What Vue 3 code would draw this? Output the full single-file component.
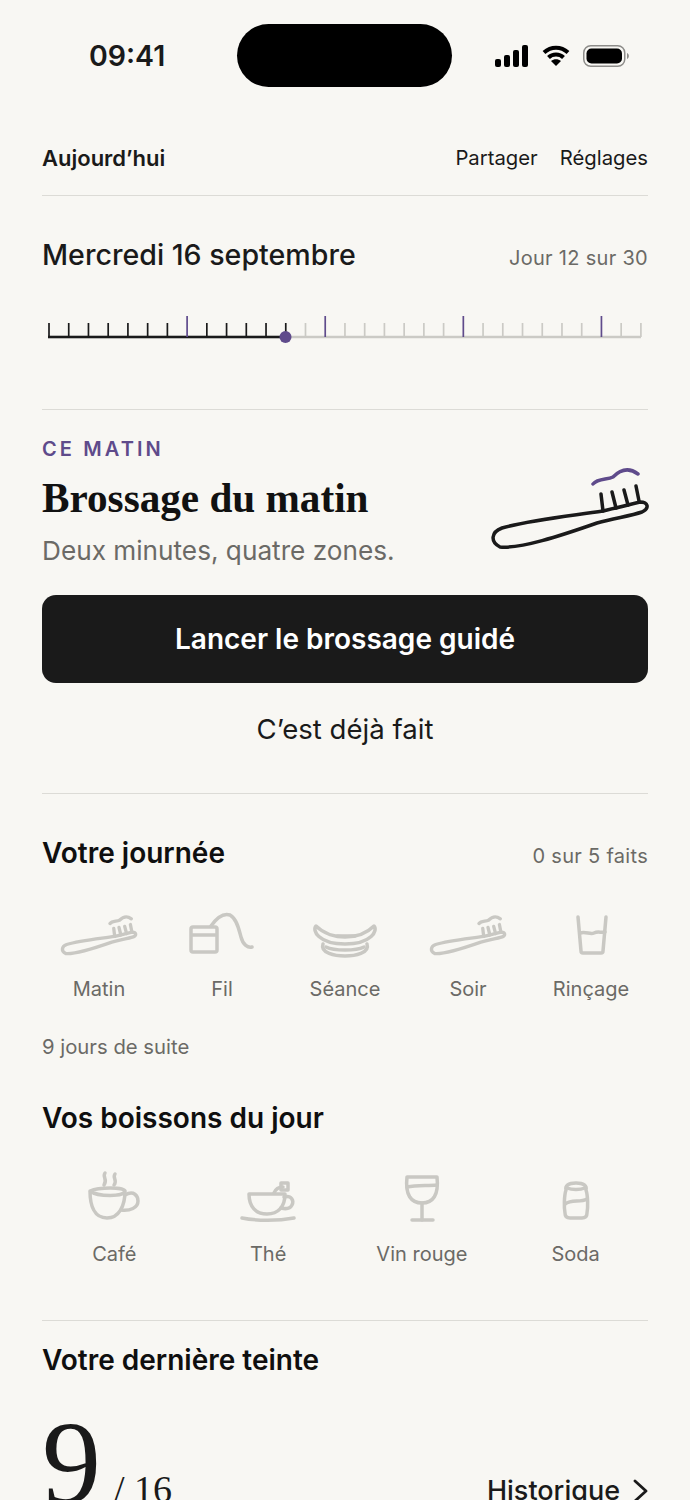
<script setup>
const ticks = Array.from({ length: 31 }, (_, i) => ({
  x: 49 + i * 19.73,
  accent: i % 7 === 0 && i > 0,
  done: i <= 12
}))

const brush = [
  'M133 61C100 66 60 70 32 78C21 82 20 92 30 97C50 99 90 86 127 73C145 68 160 66 172 62C180 58 178 52 170 52C158 55 146 58 133 61Z',
  'M133 61L131 44M146 58L142 42M158 55L154 40M169 51L166 36',
  'M123 34C128 28 137 30 143 27C152 18 160 18 168 24'
]

const habits = [
  { label: 'Matin', w: 78, box: '18 16 164 84', sw: 7, paths: brush },
  {
    label: 'Fil', w: 66, box: '190 912 66 46', sw: 3.5,
    paths: ['M194 927H216Q218 927 218 929V950Q218 952 216 952H194Q192 952 192 950V929Q192 927 194 927ZM192 935H218', 'M212 926C219 916 225 913 231 915C238 919 240 930 242 937C244 945 249 948 253 947']
  },
  {
    label: 'Séance', w: 66, box: '312 912 66 46', sw: 3.5,
    paths: ['M316 926C324 934 336 937 345 937C355 937 366 934 374 926C378 930 372 944 345 944C318 944 312 930 316 926Z', 'M323 944C320 953 335 956 345 956C355 956 370 953 367 944', 'M326 947C334 951 356 951 364 947', 'M337 936H355']
  },
  { label: 'Soir', w: 78, box: '18 16 164 84', sw: 7, paths: brush },
  {
    label: 'Rinçage', w: 46, box: '567 912 46 46', sw: 3.5,
    paths: ['M577 917L580 951Q580 953 582 953H600Q602 953 602 951L605 917', 'M579 933C585 931 589 935 593 933C597 931 600 933 604 932']
  }
]

const drinks = [
  {
    label: 'Café', box: '85 1170 60 53',
    paths: ['M91 1191C100 1187 125 1187 126 1191C125 1197 99 1197 91 1191ZM91 1191C91 1205 95 1218 108 1218C120 1218 126 1206 126 1191', 'M126 1195C135 1190 139 1196 139 1201C139 1208 131 1211 122 1210', 'M106 1173C103 1177 109 1179 105 1185M116 1174C113 1178 119 1180 115 1185']
  },
  {
    label: 'Thé', box: '238 1170 60 53',
    paths: ['M249 1194H285C285 1207 278 1214 267 1214C256 1214 249 1207 249 1194Z', 'M284 1197C292 1195 294 1201 292 1205C290 1209 285 1209 281 1208', 'M242 1218C257 1221 278 1221 294 1218', 'M274 1193C276 1188 280 1187 283 1187', 'M281 1183H288V1190H281Z']
  },
  {
    label: 'Vin rouge', box: '392 1170 60 53',
    paths: ['M407 1177H437C439 1195 433 1203 422 1203C411 1203 405 1195 407 1177Z', 'M407 1187C417 1185 427 1186 437 1185', 'M422 1203V1220', 'M412 1220H433']
  },
  {
    label: 'Soda', box: '546 1170 60 53',
    paths: ['M566 1190C565 1186 568 1183 576 1183C584 1183 587 1186 586 1190C588 1196 588 1208 587 1213C587 1217 585 1218 582 1218H570C567 1218 565 1217 565 1213C564 1208 564 1196 566 1190Z', 'M567 1188C572 1190 580 1190 585 1188', 'M565 1204C572 1199 580 1203 587 1199']
  }
]
</script>

<template>
  <div class="page">
    <div class="status">
      <span class="time">09:41</span>
      <div class="island"></div>
      <div class="status-icons">
        <svg width="34" height="22" viewBox="0 0 34 22">
          <rect x="0" y="14" width="6" height="8" rx="2" />
          <rect x="9" y="10" width="6" height="12" rx="2" />
          <rect x="18" y="5" width="6" height="17" rx="2" />
          <rect x="27" y="0" width="6" height="22" rx="2" />
        </svg>
        <svg width="28" height="22" viewBox="0 0 28 22">
          <path d="M2 7.500C9 1 19 1 26 7.500" class="wifi" />
          <path d="M6.500 12.500C10.500 8.500 17.500 8.500 21.500 12.500" class="wifi" />
          <path d="M14 21L9 16C12 13.500 16 13.500 19 16Z" />
        </svg>
        <svg width="47" height="22" viewBox="0 0 47 22">
          <rect x="0.750" y="0.750" width="41" height="20.500" rx="7" fill="none" stroke="#8d8c89" stroke-width="1.500" />
          <rect x="3.500" y="3.500" width="35.500" height="15" rx="5" />
          <path d="M44 8C46.500 9 46.500 13 44 14Z" fill="#8d8c89" />
        </svg>
      </div>
    </div>

    <main class="content">
      <header class="top-nav">
        <span class="nav-title">Aujourd’hui</span>
        <div class="nav-links">
          <span>Partager</span>
          <span>Réglages</span>
        </div>
      </header>

      <section class="date-block">
        <div class="row">
          <h2 class="date">Mercredi 16 septembre</h2>
          <span class="day-count">Jour 12 sur 30</span>
        </div>
        <svg class="ruler" width="606" height="34" viewBox="42 314 606 34">
          <line x1="48" y1="337" x2="641" y2="337" stroke="#cbcac5" stroke-width="2.400" />
          <line x1="48" y1="337" x2="286" y2="337" stroke="#1a1a1a" stroke-width="2.400" />
          <line
            v-for="t in ticks"
            :key="t.x"
            :x1="t.x"
            :x2="t.x"
            :y1="t.accent ? 316 : 323"
            y2="337"
            :stroke="t.accent ? '#5f4b8b' : t.done ? '#1a1a1a' : '#cbcac5'"
            stroke-width="1.700"
          />
          <circle cx="285.500" cy="337" r="6" fill="#5f4b8b" />
        </svg>
      </section>

      <section class="hero">
        <div class="hero-top">
          <div>
            <div class="eyebrow">CE MATIN</div>
            <h1 class="hero-title">Brossage du matin</h1>
            <p class="hero-sub">Deux minutes, quatre zones.</p>
          </div>
          <svg class="hero-brush" width="160" height="84" viewBox="20 17 160 84" fill="none" stroke-width="3.500" stroke-linecap="round" stroke-linejoin="round">
            <path :d="brush[0]" stroke="#1a1a1a" />
            <path :d="brush[1]" stroke="#1a1a1a" />
            <path :d="brush[2]" stroke="#5f4b8b" />
          </svg>
        </div>
        <button class="primary">Lancer le brossage guidé</button>
        <div class="secondary">C’est déjà fait</div>
      </section>

      <section class="day">
        <div class="row">
          <h2 class="heading">Votre journée</h2>
          <span class="day-count">0 sur 5 faits</span>
        </div>
        <div class="habits">
          <div v-for="item in habits" :key="item.label" class="icon-item">
            <svg :width="item.w" height="46" :viewBox="item.box" fill="none" stroke="#c9c8c3" :stroke-width="item.sw" stroke-linecap="round" stroke-linejoin="round">
              <path v-for="d in item.paths" :key="d" :d="d" />
            </svg>
            <span>{{ item.label }}</span>
          </div>
        </div>
        <p class="streak">9 jours de suite</p>

        <h2 class="heading drinks-heading">Vos boissons du jour</h2>
        <div class="drinks">
          <div v-for="item in drinks" :key="item.label" class="icon-item">
            <svg width="60" height="53" :viewBox="item.box" fill="none" stroke="#c9c8c3" stroke-width="3.500" stroke-linecap="round" stroke-linejoin="round">
              <path v-for="d in item.paths" :key="d" :d="d" />
            </svg>
            <span>{{ item.label }}</span>
          </div>
        </div>
      </section>

      <section class="shade">
        <h2 class="heading">Votre dernière teinte</h2>
        <div class="shade-row">
          <div class="score"><span class="score-big">9</span><span class="score-small">/ 16</span></div>
          <div class="history">
            <span>Historique</span>
            <svg width="15" height="24" viewBox="0 0 15 24" fill="none" stroke="#1a1a1a" stroke-width="2.800" stroke-linecap="round" stroke-linejoin="round">
              <path d="M2 2L13 12L2 22" />
            </svg>
          </div>
        </div>
      </section>
    </main>
  </div>
</template>

<style>
html,
body {
  margin: 0;
  background: #f8f7f3;
}
</style>

<style scoped>
.page {
  width: 690px;
  height: 1500px;
  overflow: hidden;
  background: #f8f7f3;
  color: #1a1a1a;
  font-family: Inter, "Liberation Sans", sans-serif;
}

.status {
  display: grid;
  grid-template-columns: 237px 215px 1fr;
  height: 111px;
  padding-top: 24px;
  box-sizing: border-box;
}

.time {
  height: 63px;
  line-height: 63px;
  padding-left: 89px;
  font-size: 28.500px;
  font-weight: 600;
}

.island {
  height: 63px;
  border-radius: 32px;
  background: #000;
}

.status-icons {
  display: flex;
  align-items: center;
  gap: 13px;
  height: 63px;
  padding-left: 43px;
}

.wifi {
  fill: none;
  stroke: #000;
  stroke-width: 4;
}

.content {
  padding: 0 42px;
}

.top-nav {
  display: flex;
  justify-content: space-between;
  align-items: center;
  height: 75px;
  padding-top: 9px;
  border-bottom: 1px solid #dcdbd6;
  font-size: 20.300px;
}

.nav-title {
  font-size: 22px;
  font-weight: 600;
}

.nav-links {
  display: flex;
  gap: 22px;
}

.row {
  display: flex;
  justify-content: space-between;
  align-items: center;
}

.date-block {
  padding-top: 40px;
  height: 214px;
  box-sizing: border-box;
  border-bottom: 1px solid #dcdbd6;
}

.date {
  margin: 0;
  font-size: 28.600px;
  line-height: 38px;
  font-weight: 500;
}

.day-count {
  margin-top: 6px;
  font-size: 20px;
  color: #6b6a66;
  letter-spacing: 0.300px;
}

.ruler {
  display: block;
  margin-top: 40px;
}

.hero {
  padding-top: 27px;
  height: 384px;
  box-sizing: border-box;
  border-bottom: 1px solid #dcdbd6;
}

.hero-top {
  display: flex;
  justify-content: space-between;
  align-items: flex-start;
}

.hero-brush {
  margin: 30px -2px 0 0;
}

.eyebrow {
  font-size: 20px;
  line-height: 24px;
  font-weight: 600;
  letter-spacing: 3.100px;
  color: #5f4b8b;
}

.hero-title {
  margin: 12px 0 0;
  font-family: "Liberation Serif", serif;
  font-size: 41.200px;
  line-height: 50px;
  font-weight: 700;
  color: #111;
  white-space: nowrap;
}

.hero-sub {
  margin: 11px 0 0;
  font-size: 26.200px;
  line-height: 34px;
  color: #6b6a66;
  white-space: nowrap;
}

.primary {
  display: block;
  width: 100%;
  height: 88px;
  margin-top: 27px;
  border: 0;
  border-radius: 14px;
  background: #1a1a1a;
  color: #fff;
  font: 600 28px Inter, "Liberation Sans", sans-serif;
}

.secondary {
  margin-top: 26px;
  text-align: center;
  font-size: 27.600px;
  line-height: 40px;
}

.day {
  padding-top: 40px;
}

.heading {
  margin: 0;
  font-size: 28px;
  line-height: 38px;
  font-weight: 600;
  color: #0f0f0f;
}

.habits {
  display: grid;
  grid-template-columns: repeat(5, 1fr);
  margin: 40px -4.500px 0;
}

.drinks {
  display: grid;
  grid-template-columns: repeat(4, 1fr);
  margin: 33px -4.500px 0;
}

.icon-item {
  display: flex;
  flex-direction: column;
  align-items: center;
  gap: 17px;
  font-size: 20px;
  line-height: 28px;
  color: #6b6a66;
}

.streak {
  margin: 30px 0 0;
  font-size: 20.300px;
  line-height: 28px;
  color: #6b6a66;
}

.drinks-heading {
  margin-top: 38px;
}

.shade {
  margin-top: 52px;
  padding-top: 20px;
  border-top: 1px solid #dcdbd6;
}

.shade-row {
  display: flex;
  justify-content: space-between;
  align-items: flex-end;
  height: 122px;
  margin-top: 24px;
}

.score {
  height: 122px;
  font-family: "Liberation Serif", serif;
  line-height: 122px;
}

.score-big {
  font-size: 118px;
}

.score-small {
  margin-left: 13px;
  font-size: 38px;
  vertical-align: 1px;
}

.history {
  display: flex;
  align-items: center;
  gap: 13px;
  padding-bottom: 18px;
  font-size: 27px;
  line-height: 32px;
  font-weight: 500;
}
</style>
